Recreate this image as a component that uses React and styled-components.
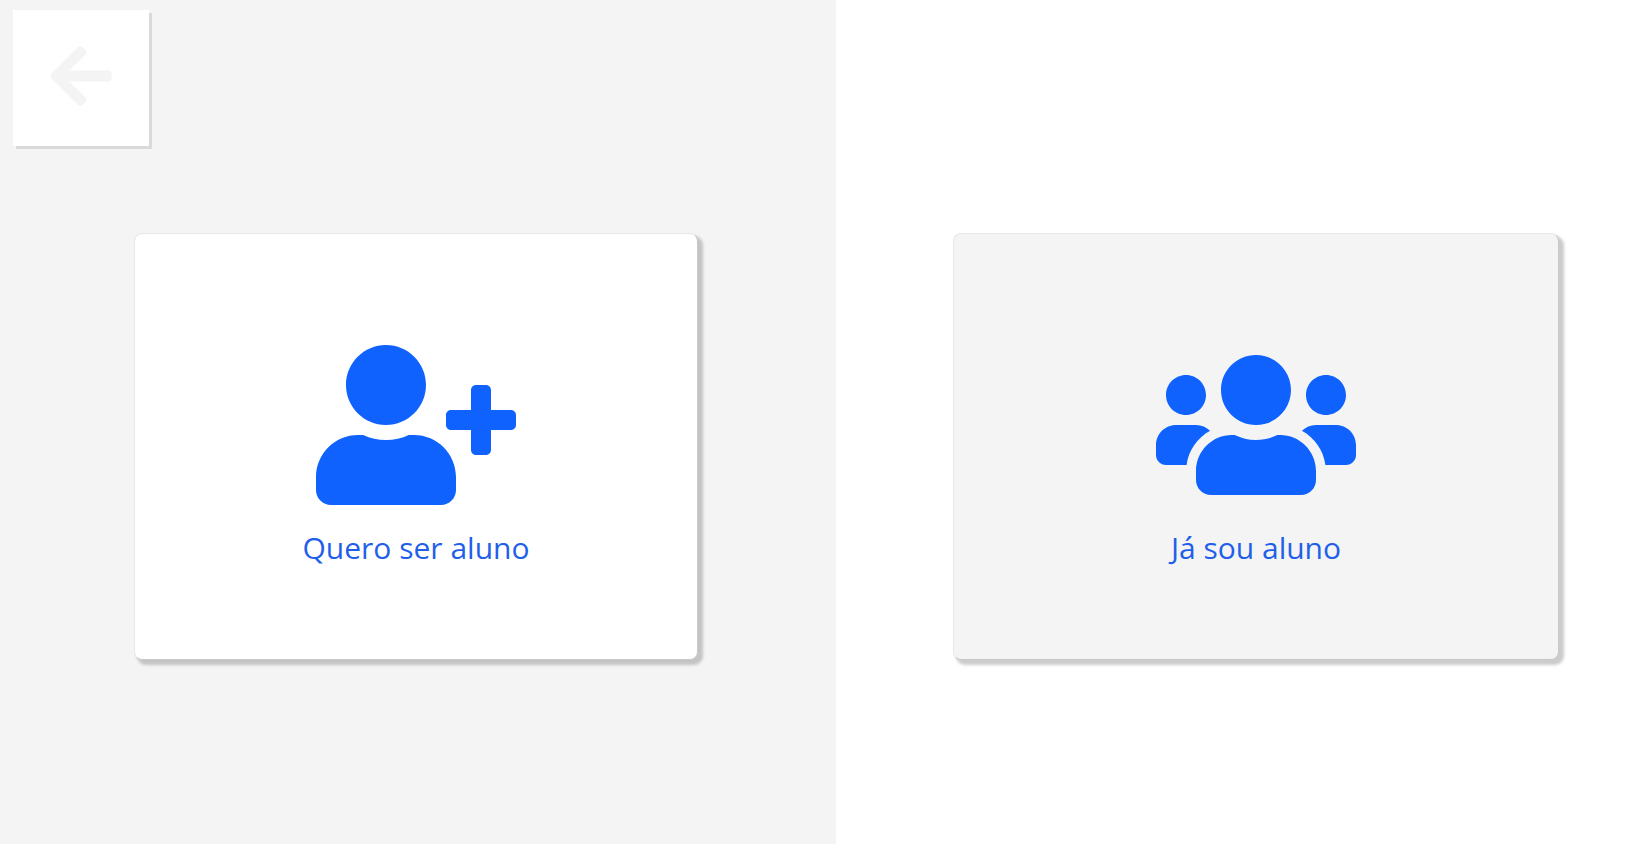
import React from "react";
import styled, { createGlobalStyle } from "styled-components";
import { FaArrowLeft, FaUserPlus, FaUsers } from "react-icons/fa";

const GlobalStyle = createGlobalStyle`
  *, *::before, *::after { box-sizing: border-box; }
  body { margin: 0; background: #ffffff; font-family: "Open Sans", "Noto Sans", sans-serif; }
`;

const Page = styled.main`
  display: grid;
  grid-template-columns: 836fr 801fr;
  min-height: 100vh;
`;

const Panel = styled.section`
  display: flex;
  flex-direction: column;
  background: ${({ $muted }) => ($muted ? "#f4f4f4" : "#ffffff")};
`;

const TopBar = styled.div`
  height: 233px;
  padding: 10px 13px;
`;

const BackButton = styled.button`
  display: flex;
  justify-content: center;
  width: 136px;
  height: 136px;
  padding: 31px 0 0;
  border: 0;
  background: #ffffff;
  color: #f4f4f4;
  box-shadow: 3px 3px 0 #dadada;
  font-size: 70px;
  cursor: pointer;
`;

const CardArea = styled.div`
  display: flex;
  padding: ${({ $wide }) => ($wide ? "0 78px 0 117px" : "0 138px 0 134px")};
`;

const OptionCard = styled.button`
  display: flex;
  flex: 1;
  flex-direction: column;
  align-items: center;
  min-height: 427px;
  padding: 91px 24px 0;
  border: 1px solid ${({ $muted }) => ($muted ? "#e8e8e8" : "#e6e6e6")};
  border-right-color: #c8c8c8;
  border-bottom-color: #c8c8c8;
  border-radius: 8px;
  background: ${({ $muted }) => ($muted ? "#f4f4f4" : "#ffffff")};
  color: #0f62fe;
  box-shadow: 4px 4px 3px 1px ${({ $muted }) => ($muted ? "#cccccc" : "#c4c4c4")};
  font-family: inherit;
  cursor: pointer;

  svg { font-size: 200px; }
`;

const OptionLabel = styled.span`
  font-size: 30px;
  font-weight: 400;
  line-height: 46px;
  color: #1f5fea;
`;

export default function App() {
  return (
    <>
      <GlobalStyle />
      <Page>
        <Panel $muted>
          <TopBar>
            <BackButton type="button" aria-label="Voltar">
              <FaArrowLeft />
            </BackButton>
          </TopBar>
          <CardArea>
            <OptionCard type="button">
              <FaUserPlus />
              <OptionLabel>Quero ser aluno</OptionLabel>
            </OptionCard>
          </CardArea>
        </Panel>
        <Panel>
          <TopBar />
          <CardArea $wide>
            <OptionCard type="button" $muted>
              <FaUsers />
              <OptionLabel>Já sou aluno</OptionLabel>
            </OptionCard>
          </CardArea>
        </Panel>
      </Page>
    </>
  );
}
